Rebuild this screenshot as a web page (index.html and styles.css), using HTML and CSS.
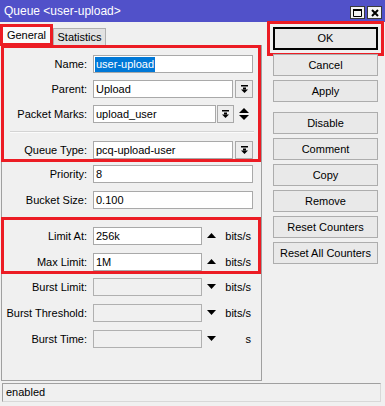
FILE: index.html
```html
<!DOCTYPE html>
<html lang="en">
<head>
    <meta charset="UTF-8">
    <meta name="viewport" content="width=device-width, initial-scale=1.0">
    <title>Queue &lt;user-upload&gt;</title>
    <link rel="stylesheet" href="styles.css">
</head>
<body>
    <div class="window">
        <div class="titlebar">
            <span class="title">Queue &lt;user-upload&gt;</span>
            <div class="winbtns">
                <span class="winbtn">
                    <svg width="9" height="8" viewBox="0 0 9 8"><path d="M0.5 0.5h8v7h-8z" fill="none" stroke="#000"/><rect x="0" y="0" width="9" height="2" fill="#000"/></svg>
                </span>
                <span class="winbtn">
                    <svg width="8" height="8" viewBox="0 0 8 8"><path d="M1 1L7 7M7 1L1 7" stroke="#000" stroke-width="2"/></svg>
                </span>
            </div>
        </div>

        <div class="main">
            <div class="left">
                <div class="tabs">
                    <div class="tab active mark">General</div>
                    <div class="tab other">Statistics</div>
                </div>

                <div class="panel">
                    <!-- name / parent / marks / type -->
                    <div class="sec g1 mark">
                        <div class="row">
                            <label>Name:</label>
                            <div class="field w160"><span class="sel">user-upload</span></div>
                        </div>
                        <div class="row">
                            <label>Parent:</label>
                            <div class="field w140">Upload</div>
                            <span class="dd"><svg width="7" height="8" viewBox="0 0 7 8"><rect x="0" y="0" width="7" height="1.5"/><rect x="2" y="2.5" width="3" height="2"/><polygon points="0,4.5 7,4.5 3.5,8"/></svg></span>
                        </div>
                        <div class="row">
                            <label>Packet Marks:</label>
                            <div class="field w123">upload_user</div>
                            <span class="dd small"><svg width="7" height="8" viewBox="0 0 7 8"><rect x="0" y="0" width="7" height="1.5"/><rect x="2" y="2.5" width="3" height="2"/><polygon points="0,4.5 7,4.5 3.5,8"/></svg></span>
                            <svg class="spin" width="10" height="12" viewBox="0 0 10 12"><polygon points="0,5 10,5 5,0"/><polygon points="0,7 10,7 5,12"/></svg>
                        </div>
                        <div class="sep"></div>
                        <div class="row">
                            <label>Queue Type:</label>
                            <div class="field w140">pcq-upload-user</div>
                            <span class="dd"><svg width="7" height="8" viewBox="0 0 7 8"><rect x="0" y="0" width="7" height="1.5"/><rect x="2" y="2.5" width="3" height="2"/><polygon points="0,4.5 7,4.5 3.5,8"/></svg></span>
                        </div>
                    </div>

                    <div class="sec plain1">
                        <div class="row">
                            <label>Priority:</label>
                            <div class="field w160">8</div>
                        </div>
                        <div class="row">
                            <label>Bucket Size:</label>
                            <div class="field w160">0.100</div>
                        </div>
                    </div>

                    <!-- limits -->
                    <div class="sec g2 mark">
                        <div class="row">
                            <label>Limit At:</label>
                            <div class="field w109">256k</div>
                            <svg class="arrow" width="9" height="5" viewBox="0 0 9 5"><polygon points="0,5 9,5 4.5,0"/></svg>
                            <span class="unit">bits/s</span>
                        </div>
                        <div class="row">
                            <label>Max Limit:</label>
                            <div class="field w109">1M</div>
                            <svg class="arrow" width="9" height="5" viewBox="0 0 9 5"><polygon points="0,5 9,5 4.5,0"/></svg>
                            <span class="unit">bits/s</span>
                        </div>
                    </div>

                    <div class="sec plain2">
                        <div class="row">
                            <label>Burst Limit:</label>
                            <div class="field w109 off"></div>
                            <svg class="arrow" width="9" height="5" viewBox="0 0 9 5"><polygon points="0,0 9,0 4.5,5"/></svg>
                            <span class="unit">bits/s</span>
                        </div>
                        <div class="row">
                            <label>Burst Threshold:</label>
                            <div class="field w109 off"></div>
                            <svg class="arrow" width="9" height="5" viewBox="0 0 9 5"><polygon points="0,0 9,0 4.5,5"/></svg>
                            <span class="unit">bits/s</span>
                        </div>
                        <div class="row">
                            <label>Burst Time:</label>
                            <div class="field w109 off"></div>
                            <svg class="arrow" width="9" height="5" viewBox="0 0 9 5"><polygon points="0,0 9,0 4.5,5"/></svg>
                            <span class="unit">s</span>
                        </div>
                    </div>
                </div>
            </div>

            <div class="buttons">
                <div class="btn default">OK</div>
                <div class="btn">Cancel</div>
                <div class="btn">Apply</div>
                <div class="btn spaced">Disable</div>
                <div class="btn">Comment</div>
                <div class="btn">Copy</div>
                <div class="btn">Remove</div>
                <div class="btn">Reset Counters</div>
                <div class="btn">Reset All Counters</div>
            </div>
        </div>

        <div class="status">enabled</div>
    </div>
</body>
</html>
```

FILE: styles.css
```css
* {
    box-sizing: border-box;
}

body {
    margin: 0;
    background-color: #f0f0f0;
    font-family: "Liberation Sans", Arial, sans-serif;
    font-size: 11px;
    color: #000;
}

.window {
    width: 385px;
    height: 406px;
    overflow: hidden;
    background-color: #f0f0f0;
}

/* title bar */
.titlebar {
    height: 22px;
    background-color: #5151c9;
    color: #fff;
    display: flex;
    justify-content: space-between;
    padding: 0 3px 0 4px;
}

.title {
    font-size: 12px;
    line-height: 23px;
}

.winbtns {
    display: flex;
    gap: 2px;
    margin-top: 6px;
}

.winbtn {
    width: 15px;
    height: 13px;
    background-color: #f4f4f4;
    border: 1px solid #3a3a3a;
    display: flex;
    align-items: center;
    justify-content: center;
}

/* red annotation boxes */
.mark {
    outline: 3px solid #ec1c24;
    outline-offset: -3px;
}

.main {
    display: flex;
    height: 361px;
}

.left {
    width: 262px;
    display: flex;
    flex-direction: column;
}

/* tabs */
.tabs {
    display: flex;
    align-items: flex-end;
    height: 24px;
}

.tab {
    width: 53px;
    text-align: center;
}

.tab.active {
    height: 22px;
    line-height: 22px;
    background-color: #fafafa;
}

.tab.other {
    height: 18px;
    line-height: 17px;
    background-color: #e2e2e2;
    border: 1px solid #b0b0b0;
    border-bottom: none;
}

.panel {
    margin: -1px 0 0 1px;
    width: 261px;
    height: 336px;
    border: 1px solid #a0a0a0;
}

.sec {
    margin-left: -1px;
    width: 260px;
    display: flex;
    flex-direction: column;
}

.g1 {
    margin-top: -1px;
    padding: 10px 0 3px;
    gap: 7px;
}

.plain1 {
    margin-top: 3px;
    gap: 8px;
}

.g2 {
    margin-top: 8px;
    padding: 10px 0 3px;
    gap: 8px;
}

.plain2 {
    margin-top: 4px;
    gap: 8px;
}

.sep {
    margin: 1px 0 1px 9px;
    width: 244px;
    height: 2px;
    border-top: 1px solid #d4d4d4;
    border-bottom: 1px solid #fbfbfb;
}

/* form rows */
.row {
    display: flex;
    align-items: center;
    height: 18px;
}

.row label {
    width: 86px;
    margin-right: 6px;
    text-align: right;
    white-space: nowrap;
}

.field {
    height: 18px;
    border: 1px solid #a9a9a9;
    background-color: #fff;
    padding: 0 2px;
    line-height: 16px;
    white-space: nowrap;
    overflow: hidden;
}

.field.off {
    background-color: #f0f0f0;
    border-color: #b0b0b0;
}

.sel {
    display: inline-block;
    margin-left: -1px;
    padding: 0 1px;
    line-height: 15px;
    background-color: #0078d7;
    color: #fff;
}

.w160 { width: 160px; }
.w140 { width: 140px; }
.w123 { width: 123px; }
.w109 { width: 109px; }

.dd {
    width: 18px;
    height: 18px;
    margin-left: 2px;
    border: 1px solid #a9a9a9;
    background-color: #ededed;
    display: flex;
    align-items: center;
    justify-content: center;
}

.dd.small {
    width: 17px;
    margin-left: 1px;
}

.spin {
    margin-left: 5px;
}

.arrow {
    margin-left: 5px;
    margin-top: -1px;
}

.unit {
    width: 29px;
    margin-left: 6px;
    text-align: right;
}

/* right side buttons */
.buttons {
    width: 105px;
    margin-left: 11px;
    padding-top: 5px;
    display: flex;
    flex-direction: column;
    gap: 4px;
}

.btn {
    height: 22px;
    border: 1px solid #adadad;
    background-color: #e9e9e9;
    text-align: center;
    line-height: 20px;
}

.btn.default {
    height: 23px;
    line-height: 21px;
    border-color: #000;
    box-shadow: inset 0 0 0 1px #000;
    outline: 3px solid #ec1c24;
    outline-offset: 3px;
}

.btn.spaced {
    margin-top: 6px;
}

/* status bar */
.status {
    margin-left: 2px;
    width: 379px;
    height: 19px;
    border: 1px solid #a0a0a0;
    border-right-color: #d8d8d8;
    border-bottom-color: #d8d8d8;
    padding-left: 3px;
    line-height: 17px;
}
```
